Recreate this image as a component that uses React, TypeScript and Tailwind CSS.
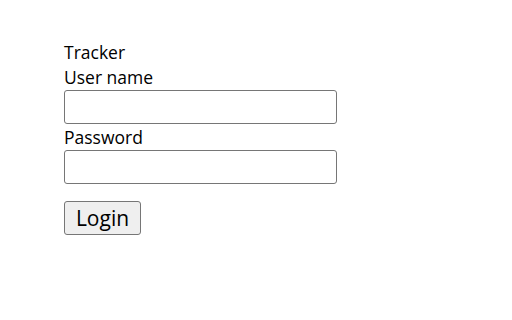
import React from "react";

export default function App() {
  return (
    <div className="w-[512px] h-[320px] bg-white pl-16 pt-10" style={{ fontFamily: '"Open Sans", "Noto Sans", sans-serif' }}>
      <div className="text-[17.5px] leading-[25px] text-black">Tracker</div>
      <form className="flex flex-col items-start" onSubmit={(e) => e.preventDefault()}>
        <label className="text-[17.5px] leading-[25px] text-black">User name</label>
        <input type="text" className="w-[273px] h-[34px] border border-[#767676] rounded-[3px] bg-white" />
        <label className="text-[17.5px] leading-[26px] text-black">Password</label>
        <input type="password" className="w-[273px] h-[34px] border border-[#767676] rounded-[3px] bg-white" />
        <button type="submit" className="mt-[17px] w-[77px] h-[34px] border border-[#767676] rounded-[3px] bg-[#efefef] text-[21px] leading-none text-black flex items-center justify-center">
          Login
        </button>
      </form>
    </div>
  );
}
